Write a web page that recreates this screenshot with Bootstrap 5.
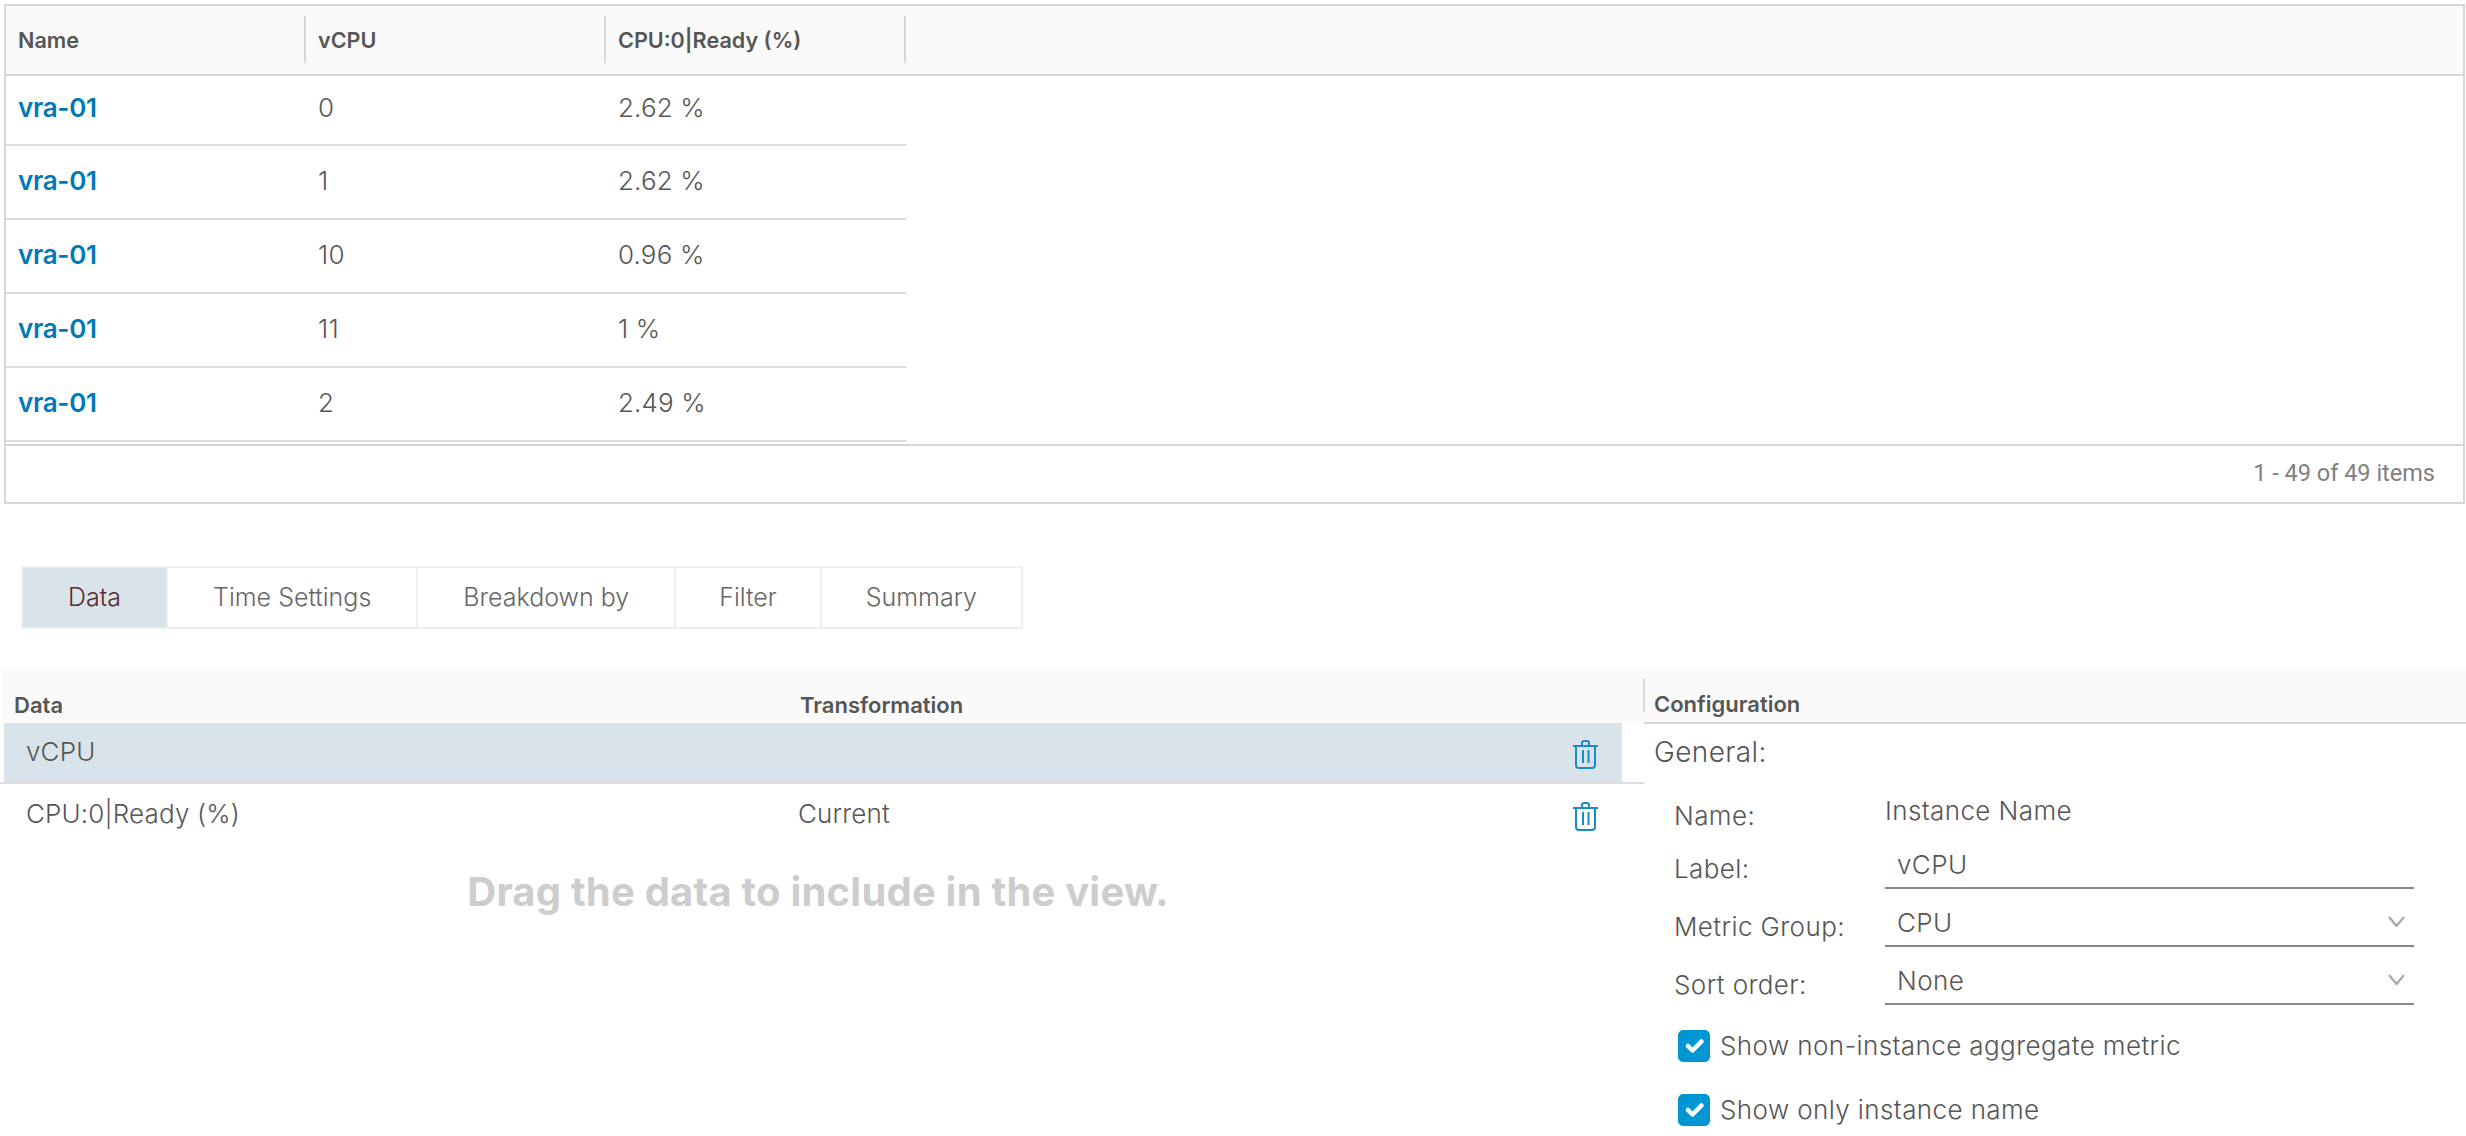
<!DOCTYPE html>
<html lang="en">
<head>
    <meta charset="UTF-8">
    <title>View - Data</title>
    <link href="https://cdn.jsdelivr.net/npm/bootstrap@5.3.0/dist/css/bootstrap.min.css" rel="stylesheet">
    <style>
        html, body { height: 100%; overflow: hidden; }
        body { font-family: "Inter", "Liberation Sans", sans-serif; font-size: 26px; letter-spacing: .4px; font-weight: 300; color: #565656; background: #fff; }

        .result-grid { margin: 4px 1px 0 4px; border: 2px solid #d7d7d7; height: 500px; display: flex; flex-direction: column; }
        .result-scroll { height: 438px; }
        .result-table { table-layout: fixed; width: 100%; margin: 0; border-collapse: collapse; }
        .result-table col.c { width: 300px; }
        .result-table th { position: relative; height: 69px; background: #fafafa; border-bottom: 2px solid #d7d7d7; padding: 0 0 0 12px; font-size: 21.6px; letter-spacing: 0; font-weight: 600; color: #565656; vertical-align: middle; }
        .result-table th.sep::after { content: ""; position: absolute; right: 0; top: 10px; bottom: 11px; width: 2px; background: #d7d7d7; }
        .result-table td { height: 74px; padding: 0 0 4px 12px; border-bottom: 2px solid #dcdcdc; color: #565656; font-weight: 300; letter-spacing: .15px; vertical-align: middle; }
        .result-table tr.first td { height: 70px; padding-bottom: 6px; }
        .result-table a { color: #0079b8; letter-spacing: -.3px; font-weight: 600; text-decoration: none; }
        .result-foot { flex: 1; border-top: 2px solid #d7d7d7; font-family: "Roboto", sans-serif; font-size: 23.5px; letter-spacing: 0; font-weight: 400; color: #808080; padding-right: 28px; }

        .tab-strip { margin: 62px 0 0 23px; }
        .tab-strip .nav-link { height: 63px; padding: 0 45px; display: flex; align-items: center; border: 2px solid #eee; margin-left: -2px; border-radius: 0; color: #666; font-size: 25px; letter-spacing: 0; }
        .tab-strip .nav-item:nth-child(4) .nav-link { padding: 0 43px; }
        .tab-strip .nav-item:nth-child(5) .nav-link { padding: 0 44px; }
        .tab-strip .nav-link.active { background: #d9e4ea; color: #5f2a2e; }

        .editor { margin-top: 40px; }
        .data-pane { width: 1644px; flex: none; }
        .data-head { height: 54px; background: #fafafa; margin-left: 2px; font-size: 22px; letter-spacing: 0; font-weight: 600; }
        .data-head span { position: relative; top: 20px; }
        .data-head .h-name { width: 798px; padding-left: 12px; }
        .data-row { height: 60px; width: 1620px; margin-left: 2px; padding: 0 0 2px 24px; letter-spacing: .15px; }
        .data-row .d-name { width: 772px; }
        .data-row.selected { height: 59px; width: 1618px; margin-left: 4px; padding-left: 22px; background: #d9e4ea; }
        .data-line { height: 2px; background: #dcdcdc; }
        .trash { width: 25px; height: 29px; margin-left: auto; margin-right: 24px; margin-top: 6px; }
        .trash path { fill: none; stroke: #1a8cc8; stroke-width: 2; }
        .drop-hint { text-align: center; margin-top: 18px; padding-right: 8px; font-size: 40px; letter-spacing: .2px; font-weight: 700; color: #cdcdcd; }

        .config-pane { flex: 1; }
        .config-head { height: 53px; margin-top: 2px; background: #fafafa; border-bottom: 2px solid #d7d7d7; font-size: 22px; letter-spacing: 0; font-weight: 600; padding-left: 10px; padding-bottom: 1px; position: relative; }
        .config-head::before { content: ""; position: absolute; left: -1px; top: 8px; bottom: 10px; width: 2px; background: #d7d7d7; }
        .config-general { padding: 10px 0 0 10px; font-size: 28px; line-height: 36px; }
        .config-form { padding: 3px 52px 0 30px; }
        .config-row { height: 58px; }
        .config-row label { width: 211px; flex: none; line-height: 36px; padding-bottom: 2px; }
        .config-row.name-row { align-items: flex-start; }
        .config-row.name-row label { padding: 25px 0 0; }
        .config-row.name-row span { padding-top: 20px; line-height: 36px; }
        .config-row .form-control, .config-row .form-select { height: 50px; font-size: 26px; letter-spacing: .4px; font-weight: 300; color: #565656; border: 0; border-bottom: 2px solid #888; border-radius: 0; padding: 3px 0 0 12px; box-shadow: none; }
        .config-row .form-select { --bs-form-select-bg-img: none; background-image: url("data:image/svg+xml,%3csvg xmlns='http://www.w3.org/2000/svg' viewBox='0 0 17 11'%3e%3cpath fill='none' stroke='%23aaa' stroke-width='2.4' d='M1 1l7.5 9L16 1'/%3e%3c/svg%3e"); background-position: right 9px center; background-size: 17px 11px; }
        .config-check { margin: 0 0 0 4px; padding: 0; min-height: 32px; gap: 10px; }
        .config-row + .config-check { margin-top: 25px; }
        .config-check + .config-check { margin-top: 32px; }
        .config-check .form-check-input { width: 32px; height: 32px; margin: 0; float: none; border-radius: 5px; background-color: #0095d3; border-color: #0095d3; flex: none; }
        .config-check .form-check-label { opacity: 1; line-height: 32px; }
    </style>
</head>
<body>
    <div class="result-grid">
        <div class="result-scroll">
            <table class="result-table">
                <colgroup><col class="c"><col class="c"><col class="c"><col></colgroup>
                <thead>
                    <tr><th class="sep">Name</th><th class="sep">vCPU</th><th class="sep">CPU:0|Ready (%)</th><th></th></tr>
                </thead>
                <tbody>
                    <tr class="first"><td><a href="#">vra-01</a></td><td>0</td><td>2.62 %</td></tr>
                    <tr><td><a href="#">vra-01</a></td><td>1</td><td>2.62 %</td></tr>
                    <tr><td><a href="#">vra-01</a></td><td>10</td><td>0.96 %</td></tr>
                    <tr><td><a href="#">vra-01</a></td><td>11</td><td>1 %</td></tr>
                    <tr><td><a href="#">vra-01</a></td><td>2</td><td>2.49 %</td></tr>
                </tbody>
            </table>
        </div>
        <div class="result-foot d-flex align-items-center justify-content-end">1 - 49 of 49 items</div>
    </div>

    <ul class="nav tab-strip">
        <li class="nav-item"><a class="nav-link active" href="#">Data</a></li>
        <li class="nav-item"><a class="nav-link" href="#">Time Settings</a></li>
        <li class="nav-item"><a class="nav-link" href="#">Breakdown by</a></li>
        <li class="nav-item"><a class="nav-link" href="#">Filter</a></li>
        <li class="nav-item"><a class="nav-link" href="#">Summary</a></li>
    </ul>

    <div class="editor d-flex">
        <div class="data-pane">
            <div class="data-head d-flex"><span class="h-name">Data</span><span>Transformation</span></div>
            <div class="data-row selected d-flex align-items-center">
                <span class="d-name">vCPU</span><span></span>
                <svg class="trash" viewBox="0 0 25 29"><path d="M0 6h25M9 6V3a2 2 0 0 1 2-2h3a2 2 0 0 1 2 2v3M3 6v19a3 3 0 0 0 3 3h13a3 3 0 0 0 3-3V6M10 10v13M15.5 10v13"/></svg>
            </div>
            <div class="data-line"></div>
            <div class="data-row d-flex align-items-center">
                <span class="d-name">CPU:0|Ready (%)</span><span>Current</span>
                <svg class="trash" viewBox="0 0 25 29"><path d="M0 6h25M9 6V3a2 2 0 0 1 2-2h3a2 2 0 0 1 2 2v3M3 6v19a3 3 0 0 0 3 3h13a3 3 0 0 0 3-3V6M10 10v13M15.5 10v13"/></svg>
            </div>
            <div class="drop-hint">Drag the data to include in the view.</div>
        </div>

        <div class="config-pane">
            <div class="config-head d-flex align-items-end">Configuration</div>
            <div class="config-general">General:</div>
            <div class="config-form">
                <div class="config-row name-row d-flex"><label>Name:</label><span>Instance Name</span></div>
                <div class="config-row d-flex align-items-end"><label for="cfgLabel">Label:</label><input id="cfgLabel" class="form-control" value="vCPU"></div>
                <div class="config-row d-flex align-items-end"><label for="cfgGroup">Metric Group:</label><select id="cfgGroup" class="form-select"><option>CPU</option></select></div>
                <div class="config-row d-flex align-items-end"><label for="cfgSort">Sort order:</label><select id="cfgSort" class="form-select"><option>None</option></select></div>
                <div class="form-check config-check d-flex align-items-center"><input class="form-check-input" type="checkbox" id="cfgAgg" checked><label class="form-check-label" for="cfgAgg">Show non-instance aggregate metric</label></div>
                <div class="form-check config-check d-flex align-items-center"><input class="form-check-input" type="checkbox" id="cfgOnly" checked><label class="form-check-label" for="cfgOnly">Show only instance name</label></div>
            </div>
        </div>
    </div>

    <script src="https://cdn.jsdelivr.net/npm/bootstrap@5.3.0/dist/js/bootstrap.bundle.min.js"></script>
</body>
</html>
